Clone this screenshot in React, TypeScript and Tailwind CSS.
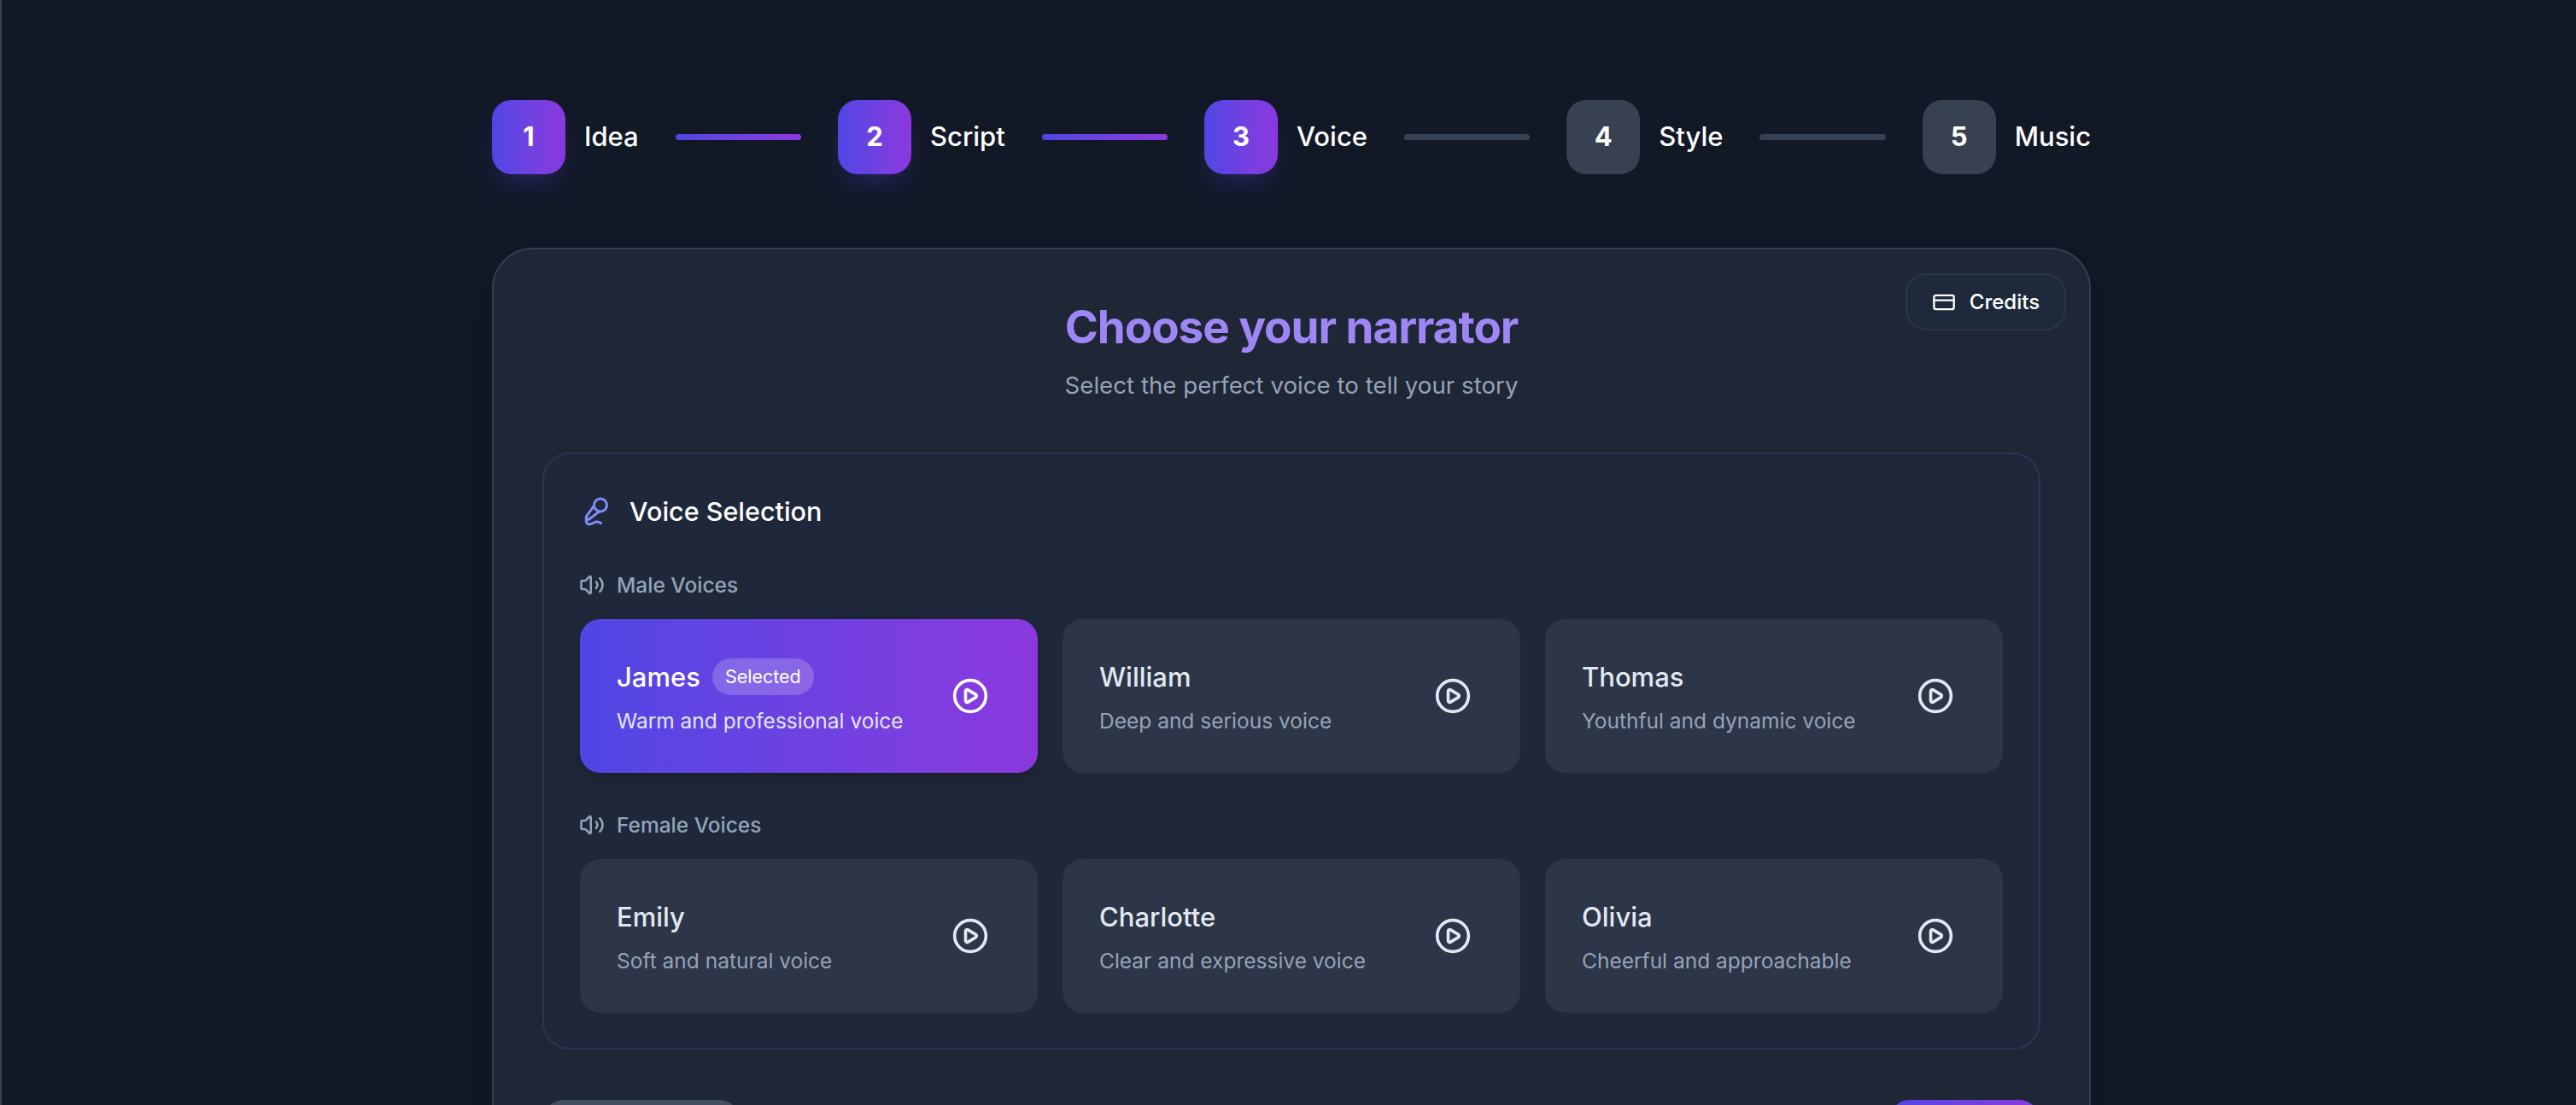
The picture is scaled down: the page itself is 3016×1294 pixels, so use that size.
import { Fragment } from "react";
import { CirclePlay, CreditCard, MicVocal, Volume2 } from "lucide-react";

const steps = [
  { n: 1, label: "Idea", active: true },
  { n: 2, label: "Script", active: true },
  { n: 3, label: "Voice", active: true },
  { n: 4, label: "Style", active: false },
  { n: 5, label: "Music", active: false },
];

const male = [
  { name: "James", desc: "Warm and professional voice", selected: true },
  { name: "William", desc: "Deep and serious voice" },
  { name: "Thomas", desc: "Youthful and dynamic voice" },
];
const female = [
  { name: "Emily", desc: "Soft and natural voice" },
  { name: "Charlotte", desc: "Clear and expressive voice" },
  { name: "Olivia", desc: "Cheerful and approachable" },
];

function VoiceCard({ name, desc, selected }: { name: string; desc: string; selected?: boolean }) {
  return (
    <div
      className={
        "h-[180px] rounded-[24px] pl-[43px] pr-[57px] flex items-center justify-between " +
        (selected
          ? "bg-gradient-to-r from-[#4f46e5] to-[#8b38de] shadow-[0_8px_20px_rgba(0,0,0,0.2)]"
          : "bg-[#2d3548]")
      }
    >
      <div className="pt-[2px]">
        <div className="flex items-center gap-[14px] h-[44px]">
          <span className={"text-[31px] font-medium leading-[44px] " + (selected ? "text-white" : "text-[#e2e8f0]")}>{name}</span>
          {selected && (
            <span className="h-[43px] px-[15px] rounded-full bg-white/20 text-white text-[21.5px] leading-[43px]">Selected</span>
          )}
        </div>
        <div className={"mt-[11px] text-[24.5px] leading-[36px] " + (selected ? "text-[#e0e7ff]" : "text-[#94a3b8]")}>{desc}</div>
      </div>
      <CirclePlay size={44} strokeWidth={2} className={"shrink-0 " + (selected ? "text-white" : "text-[#e2e8f0]")} />
    </div>
  );
}

function Group({ title, items, className }: { title: string; items: { name: string; desc: string; selected?: boolean }[]; className?: string }) {
  return (
    <div className={className}>
      <div className="flex items-center gap-[14px] h-[40px] text-[#94a3b8]">
        <Volume2 size={30} strokeWidth={2} className="-ml-[1px] shrink-0" />
        <span className="text-[24.5px] font-medium leading-[40px]">{title}</span>
      </div>
      <div className="mt-[20px] grid grid-cols-3 gap-[29px]">
        {items.map((v) => (
          <VoiceCard key={v.name} {...v} />
        ))}
      </div>
    </div>
  );
}

export default function App() {
  return (
    <div
      className="h-screen overflow-hidden bg-[#121826] border-l-2 border-[#374151] pl-[6px] pt-[117px] text-white"
      style={{ fontFamily: "Inter, 'Noto Sans', sans-serif" }}
    >
      <div className="mx-auto w-[1872px]">
        <div className="flex items-center gap-[43px]">
          {steps.map((s, i) => (
            <Fragment key={s.n}>
              <div className="flex items-center gap-[22px] shrink-0">
                <div
                  className={
                    "w-[86px] h-[87px] rounded-[23px] flex items-center justify-center text-[31px] font-bold " +
                    (s.active
                      ? "bg-gradient-to-r from-[#4f46e5] to-[#8b38de] shadow-[0_16px_30px_-6px_rgba(79,70,229,0.28)]"
                      : "bg-[#374151]")
                  }
                >
                  {s.n}
                </div>
                <span className="text-[31px] font-medium">{s.label}</span>
              </div>
              {i < steps.length - 1 && (
                <div
                  className={
                    "flex-1 h-[7px] rounded-full " +
                    (i < 2 ? "bg-gradient-to-r from-[#4f46e5] to-[#8b38de]" : "bg-[#374151]")
                  }
                />
              )}
            </Fragment>
          ))}
        </div>

        <div className="relative mt-[86px] h-[1100px] rounded-[48px] border-2 border-[#333e50] bg-[#1f2636] px-[57px] pt-[56px] shadow-[0_20px_50px_rgba(0,0,0,0.2)]">
          <button className="absolute top-[28px] right-[27px] w-[188px] h-[67px] rounded-[24px] border-2 border-[#2a3547] bg-[#1e293b] flex items-center justify-center gap-[16px] text-[24px] font-medium text-white">
            <CreditCard size={28} strokeWidth={2} />
            Credits
          </button>
          <h1 className="text-center text-[53px] leading-[70px] tracking-[-0.02em] font-bold text-[#9f86f5]">Choose your narrator</h1>
          <p className="mt-[10px] text-center text-[27.7px] leading-[46px] text-[#94a3b8]">Select the perfect voice to tell your story</p>

          <div className="mt-[56px] rounded-[32px] border-2 border-[#2a3555] bg-[#1f283a] px-[42px] pt-[37px] pb-[41px]">
            <div className="flex items-center gap-[22px] h-[60px]">
              <MicVocal size={36} strokeWidth={2} className="text-[#818cf8] shrink-0" />
              <span className="text-[30.5px] font-medium">Voice Selection</span>
            </div>
            <Group className="mt-[36px]" title="Male Voices" items={male} />
            <Group className="mt-[41px]" title="Female Voices" items={female} />
          </div>

          <div className="mt-[59px] flex justify-between px-[1px]">
            <div className="w-[230px] h-[70px] rounded-[24px] bg-[#424e61]" />
            <div className="w-[176px] h-[70px] rounded-[24px] bg-gradient-to-r from-[#4f46e5] to-[#8b38de]" />
          </div>
        </div>
      </div>
    </div>
  );
}
